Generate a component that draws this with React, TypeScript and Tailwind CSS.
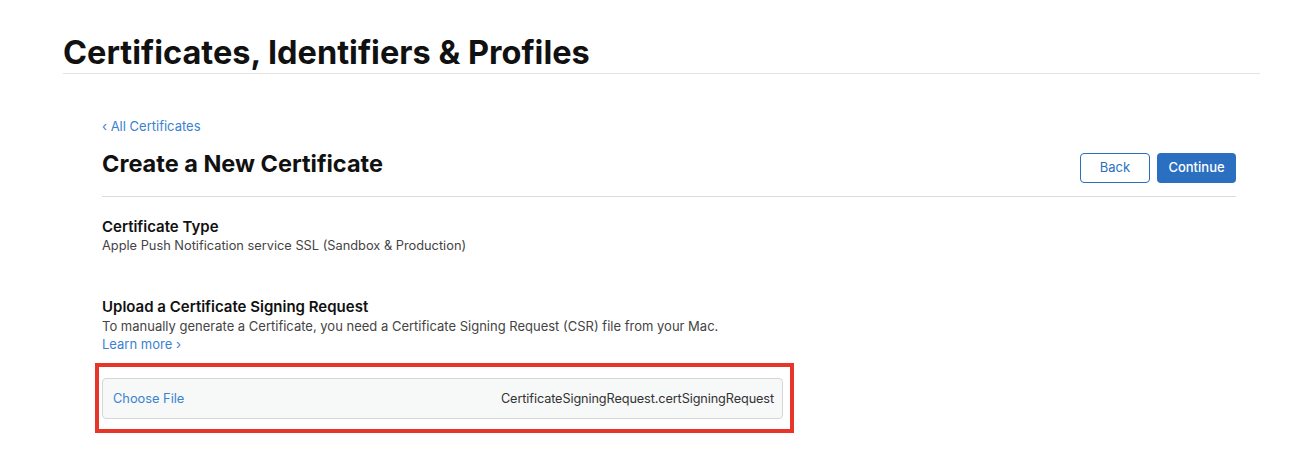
import React from 'react';

const font = { fontFamily: 'Inter, "Noto Sans", "Liberation Sans", sans-serif' };

const App: React.FC = () => {
  return (
    <div className="min-h-[458px] w-[1292px] bg-white text-[#1d1d1f]" style={font}>
      <div className="ml-[63px] w-[1197px] pt-[34px]">
        {/* Page title */}
        <h1 className="text-[32.5px] font-bold leading-[38px] text-[#111] border-b border-[#e3e3e3] pb-[1px]">
          Certificates, Identifiers &amp; Profiles
        </h1>

        <div className="ml-[39px] w-[1134px] pt-[44px]">
          <a className="block text-[13px] leading-[16px] text-[#3a82d0]">‹ All Certificates</a>

          {/* Header row */}
          <div className="mt-[11px] flex items-center justify-between border-b border-[#dcdcdc] pb-[13px]">
            <h2 className="text-[23.5px] font-bold leading-[30px] text-[#111]">Create a New Certificate</h2>
            <div className="mt-[8px] flex gap-[7px]">
              <button className="h-[30px] w-[70px] rounded-[4px] border border-[#2a6fc0] bg-white text-[13px] text-[#2a6fc0]">
                Back
              </button>
              <button className="h-[30px] w-[79px] rounded-[4px] bg-[#2a6fc0] text-[13px] font-medium text-white">
                Continue
              </button>
            </div>
          </div>

          {/* Certificate type */}
          <div className="pt-[20px]">
            <h3 className="text-[15px] font-semibold leading-[20px] text-[#111]">Certificate Type</h3>
            <p className="text-[12.8px] leading-[17px] text-[#444]">
              Apple Push Notification service SSL (Sandbox &amp; Production)
            </p>
          </div>

          {/* Upload CSR */}
          <div className="pt-[43px]">
            <h3 className="text-[15px] font-semibold leading-[20px] text-[#111]">Upload a Certificate Signing Request</h3>
            <p className="text-[13px] leading-[18px] text-[#444]">
              To manually generate a Certificate, you need a Certificate Signing Request (CSR) file from your Mac.
            </p>
            <a className="block text-[13px] leading-[18px] text-[#3a82d0]">Learn more ›</a>
          </div>

          {/* Highlighted file chooser */}
          <div className="-ml-[7px] mt-[10px] w-[699px] border-[4px] border-[#e8352a] pl-[3px] pr-[7px] pt-[11px] pb-[10px]">
            <div className="flex h-[41px] items-center justify-between rounded-[4px] border border-[#d6d6d6] bg-[#f7f8f8] pl-[10px] pr-[8px]">
              <span className="text-[12.8px] text-[#3a82d0]">Choose File</span>
              <span className="text-[12.7px] tracking-[-0.1px] text-[#333]">CertificateSigningRequest.certSigningRequest</span>
            </div>
          </div>
        </div>
      </div>
    </div>
  );
};

export default App;
